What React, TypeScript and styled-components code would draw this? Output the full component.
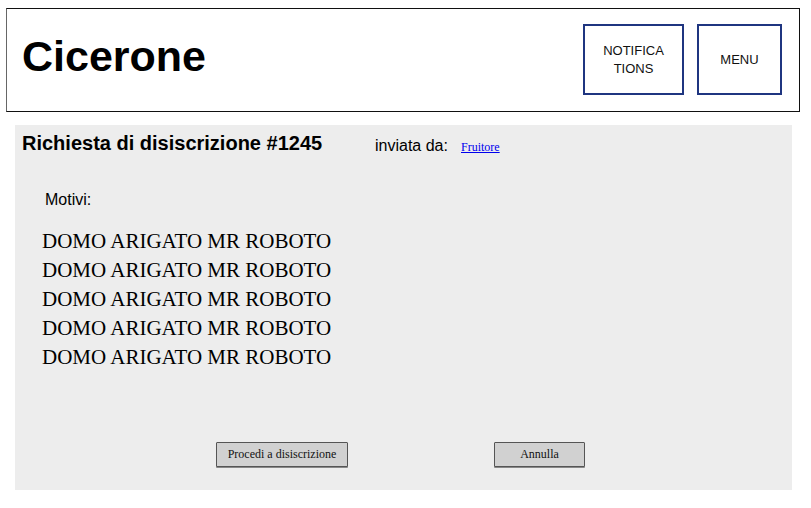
import React from "react";
import styled, { createGlobalStyle } from "styled-components";

const Global = createGlobalStyle`
  html, body { margin: 0; padding: 0; background: #ffffff; }
  body { font-family: "Liberation Sans", Arial, sans-serif; color: #000; }
`;

const Page = styled.div`
  width: 811px;
  height: 508px;
  padding: 8px 0 0 6px;
  box-sizing: border-box;
  display: flex;
  flex-direction: column;
`;

const Header = styled.header`
  width: 794px;
  height: 104px;
  box-sizing: border-box;
  border: 1px solid #111;
  border-left-color: #666;
  display: flex;
  align-items: center;
  padding: 0 17px 0 15px;
`;

const Logo = styled.h1`
  margin: 0 auto 0 0;
  font-size: 43px;
  font-weight: 700;
  line-height: 1;
  position: relative;
  top: -4px;
`;

const NavButton = styled.div<{ $w: number }>`
  width: ${(p) => p.$w}px;
  height: 71px;
  box-sizing: border-box;
  border: 2px solid #1f3580;
  display: flex;
  align-items: center;
  justify-content: center;
  text-align: center;
  font-size: 13px;
  line-height: 18px;
  color: #111;
  margin-left: 13px;
  margin-top: -2px;
  padding-top: 2px;
`;

const Panel = styled.main`
  margin: 13px 0 0 9px;
  width: 777px;
  height: 365px;
  background: #ededed;
  box-sizing: border-box;
  padding: 7px 0 0 7px;
  display: flex;
  flex-direction: column;
`;

const TitleRow = styled.div`
  display: flex;
  align-items: baseline;
`;

const Title = styled.h2`
  margin: 0;
  font-size: 20px;
  font-weight: 700;
  line-height: 23px;
  width: 353px;
`;

const SentBy = styled.span`
  font-size: 16px;
  width: 86px;
  position: relative;
  top: 1px;
`;

const UserLink = styled.a`
  font-family: "Liberation Serif", "Times New Roman", serif;
  font-size: 12px;
  color: #0000ee;
  text-decoration: underline;
  position: relative;
  top: 1px;
`;

const Label = styled.div`
  margin: 36px 0 0 23px;
  font-size: 16px;
  line-height: 18px;
`;

const Reasons = styled.div`
  margin: 18px 0 0 20px;
  font-family: "Liberation Serif", "Times New Roman", serif;
  font-size: 21px;
  line-height: 29px;
`;

const Actions = styled.div`
  margin-top: 70px;
  display: flex;
  padding-left: 194px;
  gap: 146px;
`;

const ActionButton = styled.button<{ $w: number }>`
  width: ${(p) => p.$w}px;
  height: 25px;
  box-sizing: border-box;
  background: #d1d1d1;
  border: 1px solid #555;
  border-radius: 1px;
  font-family: "Liberation Serif", "Times New Roman", serif;
  font-size: 12px;
  color: #111;
  padding: 0;
  box-shadow: 0 1px 0 #888;
`;

const reasons = Array.from({ length: 5 }, () => "DOMO ARIGATO MR ROBOTO");

export default function App() {
  return (
    <>
      <Global />
      <Page>
        <Header>
          <Logo>Cicerone</Logo>
          <NavButton $w={101}>
            NOTIFICA
            <br />
            TIONS
          </NavButton>
          <NavButton $w={85}>MENU</NavButton>
        </Header>
        <Panel>
          <TitleRow>
            <Title>Richiesta di disiscrizione #1245</Title>
            <SentBy>inviata da:</SentBy>
            <UserLink href="#">Fruitore</UserLink>
          </TitleRow>
          <Label>Motivi:</Label>
          <Reasons>
            {reasons.map((r, i) => (
              <div key={i}>{r}</div>
            ))}
          </Reasons>
          <Actions>
            <ActionButton $w={132}>Procedi a disiscrizione</ActionButton>
            <ActionButton $w={91}>Annulla</ActionButton>
          </Actions>
        </Panel>
      </Page>
    </>
  );
}
